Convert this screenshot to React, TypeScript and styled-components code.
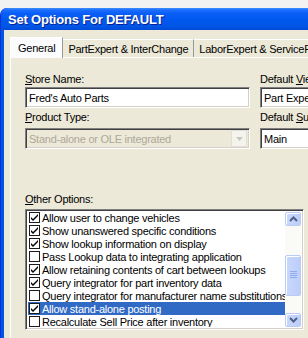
import styled, { createGlobalStyle } from 'styled-components';

const GlobalStyle = createGlobalStyle`
  html, body {
    margin: 0;
    padding: 0;
    overflow: hidden;
    background: #f2f2f2;
  }
  body {
    font-family: "Liberation Sans", Arial, sans-serif;
    font-size: 11px;
    letter-spacing: -0.25px;
  }
`;

const Window = styled.div`
  margin-top: 8px;
  width: 470px;
  height: 360px;
  background: #0055e5;
  border-radius: 7px 7px 0 0;
  border-left: 1px solid #0831d9;
  display: flex;
  flex-direction: column;
`;

const TitleBar = styled.div`
  height: 22px;
  flex: none;
  display: flex;
  align-items: center;
  padding-left: 7px;
  border-radius: 7px 7px 0 0;
  background: linear-gradient(
    to bottom,
    #3d8dff 0%,
    #1a6cff 10%,
    #0a5ef7 25%,
    #0058ee 55%,
    #0055e5 85%,
    #0049d6 100%
  );
  color: #fff;
  font-weight: bold;
  font-size: 13px;
  letter-spacing: -0.2px;
  text-shadow: 1px 1px 0 #0a1e8c;
`;

const Client = styled.div`
  flex: 1;
  margin-left: 3px;
  background: #ece9d8;
  padding: 7px 0 0 6px;
  color: #000;
`;

const TabStrip = styled.div`
  display: flex;
  align-items: flex-end;
  height: 20px;
`;

const Tab = styled.div<{ $active?: boolean }>`
  height: ${(p) => (p.$active ? 21 : 18)}px;
  margin-bottom: ${(p) => (p.$active ? -1 : 0)}px;
  padding: 0 ${(p) => (p.$active ? 7 : 5)}px;
  display: flex;
  align-items: center;
  box-sizing: border-box;
  background: ${(p) => (p.$active ? '#fcfcfe' : '#ece9d8')};
  border-top: 1px solid #fff;
  border-left: ${(p) => (p.$active ? '1px solid #fff' : 'none')};
  border-right: 1px solid #919b9c;
  position: relative;
  z-index: ${(p) => (p.$active ? 1 : 0)};
  white-space: nowrap;
`;

const Panel = styled.div`
  border-top: 1px solid #fff;
  border-left: 1px solid #fff;
  height: 300px;
  padding: 15px 0 0 14px;
`;

const Columns = styled.div`
  display: grid;
  grid-template-columns: 225px 225px;
  column-gap: 10px;
  row-gap: 3px;
`;

const Field = styled.div`
  display: flex;
  flex-direction: column;
`;

const Label = styled.div<{ $gap?: number }>`
  line-height: 13px;
  height: 13px;
  margin-bottom: ${(p) => p.$gap ?? 1}px;
  white-space: nowrap;
  u {
    text-decoration: underline;
    text-underline-offset: 1px;
  }
`;

const Sunken = styled.div<{ $disabled?: boolean }>`
  height: 21px;
  box-sizing: border-box;
  border-top: 1px solid #808080;
  border-left: 1px solid #808080;
  border-right: 1px solid #fff;
  border-bottom: 1px solid #fff;
  box-shadow: inset 1px 1px 0 #404040, inset -1px -1px 0 #d4d0c8;
  background: ${(p) => (p.$disabled ? '#ece9d8' : '#fff')};
  color: ${(p) => (p.$disabled ? '#aca899' : '#000')};
  display: flex;
  align-items: center;
  padding: 0 2px 0 3px;
  white-space: nowrap;
  overflow: hidden;
`;

const ComboText = styled.span`
  flex: 1;
`;

const DropButton = styled.div`
  width: 16px;
  height: 17px;
  box-sizing: border-box;
  background: #f4f3ee;
  border: 1px solid #e2e0d6;
  display: flex;
  align-items: center;
  justify-content: center;
`;

const OtherLabel = styled(Label)`
  margin-top: 44px;
  margin-bottom: 3px;
`;

const ListBox = styled.div`
  width: 279px;
  height: 121px;
  box-sizing: border-box;
  border-top: 1px solid #808080;
  border-left: 1px solid #808080;
  border-right: 1px solid #fff;
  border-bottom: 1px solid #fff;
  box-shadow: inset 1px 1px 0 #404040, inset -1px -1px 0 #d4d0c8;
  background: #fff;
  padding: 1px 2px 2px 2px;
  display: flex;
`;

const Rows = styled.div`
  flex: 1;
  overflow: hidden;
`;

const Row = styled.div<{ $selected?: boolean }>`
  height: 13px;
  display: flex;
  align-items: center;
  gap: 2px;
  padding-left: 1px;
  background: ${(p) => (p.$selected ? '#316ac5' : 'transparent')};
  color: ${(p) => (p.$selected ? '#fff' : '#000')};
  white-space: nowrap;
`;

const Check = styled.div`
  width: 11px;
  height: 11px;
  flex: none;
  box-sizing: border-box;
  border: 1px solid #1c1c1c;
  background: #fff;
  display: flex;
  align-items: center;
  justify-content: center;
`;

const ScrollBar = styled.div`
  width: 16px;
  flex: none;
  display: flex;
  flex-direction: column;
  background: #fafaf6;
  margin-top: 1px;
`;

const ScrollButton = styled.div`
  height: 14px;
  box-sizing: border-box;
  border: 1px solid #bacbf5;
  border-radius: 2px;
  background: linear-gradient(to right, #c9d8fc, #bccef9);
  box-shadow: inset 1px 1px 0 #fff;
  display: flex;
  align-items: center;
  justify-content: center;
`;

const Track = styled.div<{ $h: number }>`
  height: ${(p) => p.$h}px;
`;

const Thumb = styled(ScrollButton)`
  height: 42px;
`;

const CheckMark = () => (
  <svg width="9" height="9" viewBox="0 0 9 9">
    <path d="M1 4 L3 6 L8 1 L8 3 L3 8 L1 6 Z" fill="#000" />
  </svg>
);

const Chevron = ({ up }: { up?: boolean }) => (
  <svg width="9" height="6" viewBox="0 0 9 6">
    <path
      d={up ? 'M1 5 L4.5 1.5 L8 5' : 'M1 1 L4.5 4.5 L8 1'}
      fill="none"
      stroke="#4d6185"
      strokeWidth="2"
    />
  </svg>
);

const Grip = () => (
  <svg width="7" height="8" viewBox="0 0 7 8">
    {[0, 2, 4, 6].map((y) => (
      <rect key={y} x="0" y={y} width="7" height="1" fill="#8eabf0" />
    ))}
  </svg>
);

const options = [
  { text: 'Allow user to change vehicles', on: true },
  { text: 'Show unanswered specific conditions', on: true },
  { text: 'Show lookup information on display', on: true },
  { text: 'Pass Lookup data to integrating application', on: false },
  { text: 'Allow retaining contents of cart between lookups', on: true },
  { text: 'Query integrator for part inventory data', on: true },
  { text: 'Query integrator for manufacturer name substitutions', on: false },
  { text: 'Allow stand-alone posting', on: true, selected: true },
  { text: 'Recalculate Sell Price after inventory', on: false },
];

const App = () => {
  return (
    <>
      <GlobalStyle />
      <Window>
        <TitleBar>Set Options For DEFAULT</TitleBar>
        <Client>
          <TabStrip>
            <Tab $active>General</Tab>
            <Tab>PartExpert &amp; InterChange</Tab>
            <Tab>LaborExpert &amp; ServiceFacts</Tab>
          </TabStrip>
          <Panel>
            <Columns>
              <Field>
                <Label>
                  <u>S</u>tore Name:
                </Label>
                <Sunken>Fred's Auto Parts</Sunken>
              </Field>
              <Field>
                <Label>
                  Default <u>V</u>iew:
                </Label>
                <Sunken>Part Expert</Sunken>
              </Field>
              <Field>
                <Label $gap={4}>
                  <u>P</u>roduct Type:
                </Label>
                <Sunken $disabled>
                  <ComboText>Stand-alone or OLE integrated</ComboText>
                  <DropButton>
                    <svg width="7" height="4" viewBox="0 0 7 4">
                      <path d="M0 0 H7 L3.5 4 Z" fill="#c9c7ba" />
                    </svg>
                  </DropButton>
                </Sunken>
              </Field>
              <Field>
                <Label $gap={4}>
                  Default <u>S</u>upplier:
                </Label>
                <Sunken>Main</Sunken>
              </Field>
            </Columns>
            <OtherLabel>
              <u>O</u>ther Options:
            </OtherLabel>
            <ListBox>
              <Rows>
                {options.map((o) => (
                  <Row key={o.text} $selected={o.selected}>
                    <Check>{o.on && <CheckMark />}</Check>
                    <span>{o.text}</span>
                  </Row>
                ))}
              </Rows>
              <ScrollBar>
                <ScrollButton>
                  <Chevron up />
                </ScrollButton>
                <Track $h={29} />
                <Thumb>
                  <Grip />
                </Thumb>
                <Track $h={17} />
                <ScrollButton>
                  <Chevron />
                </ScrollButton>
              </ScrollBar>
            </ListBox>
          </Panel>
        </Client>
      </Window>
    </>
  );
};

export default App;
